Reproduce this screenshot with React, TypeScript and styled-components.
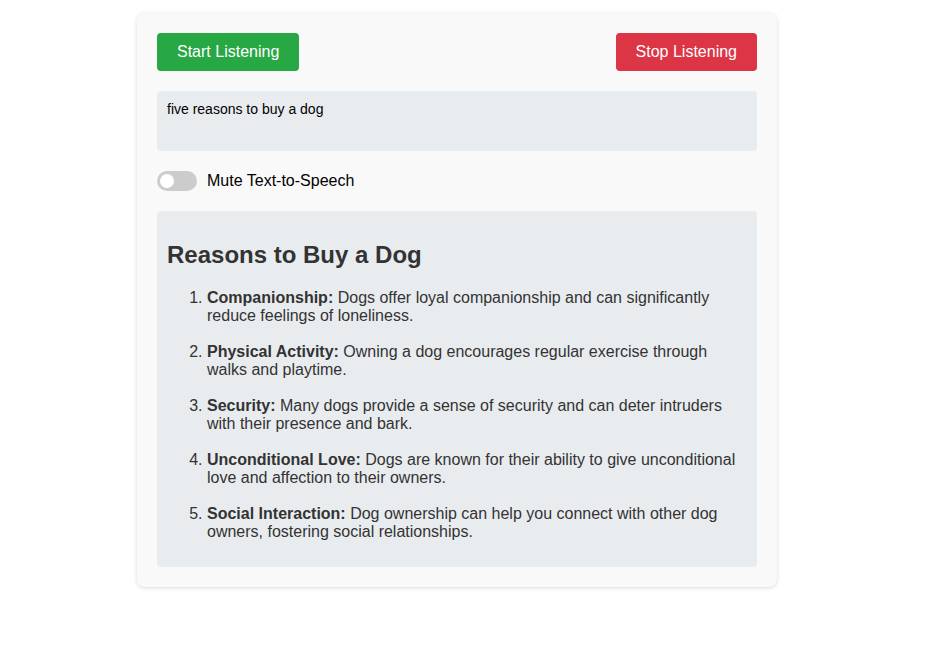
import React from "react";
import styled, { createGlobalStyle } from "styled-components";

const GlobalStyle = createGlobalStyle`
  body {
    margin: 0;
    background: #ffffff;
    font-family: "Liberation Sans", Arial, sans-serif;
  }
`;

const Page = styled.div`
  padding: 13px 0 40px 137px;
`;

const Card = styled.div`
  width: 600px;
  padding: 20px;
  background: #f9f9f9;
  border-radius: 8px;
  box-shadow: 0 1px 4px rgba(0, 0, 0, 0.15);
`;

const Controls = styled.div`
  display: flex;
  justify-content: space-between;
  margin-bottom: 20px;
`;

const Button = styled.button<{ $variant: "start" | "stop" }>`
  height: 38px;
  padding: 0 20px;
  border: none;
  border-radius: 4px;
  font-family: "Liberation Sans", Arial, sans-serif;
  font-size: 16px;
  color: #ffffff;
  background: ${(p) => (p.$variant === "start" ? "#28a745" : "#dc3545")};
  cursor: pointer;
`;

const Transcript = styled.div`
  box-sizing: border-box;
  height: 60px;
  padding: 10px;
  background: #e9ecef;
  border-radius: 4px;
  font-size: 14px;
  line-height: 16px;
  color: #000000;
`;

const ToggleRow = styled.label`
  display: flex;
  align-items: center;
  gap: 10px;
  margin: 20px 0;
  font-size: 16px;
  color: #000000;
`;

const Track = styled.span`
  position: relative;
  width: 40px;
  height: 20px;
  border-radius: 10px;
  background: #cccccc;
`;

const Knob = styled.span`
  position: absolute;
  top: 3px;
  left: 3px;
  width: 14px;
  height: 14px;
  border-radius: 50%;
  background: #ffffff;
`;

const Response = styled.div`
  padding: 10px;
  background: #e9ecef;
  border-radius: 4px;
  color: #333333;
  display: flow-root;
`;

const Title = styled.h2`
  margin: 20px 0;
  font-size: 24px;
  line-height: 28px;
  font-weight: bold;
`;

const List = styled.ol`
  margin: 0 0 16px;
  padding-left: 40px;
  font-size: 16px;
  line-height: 18px;

  li + li {
    margin-top: 18px;
  }
`;

const reasons = [
  ["Companionship:", "Dogs offer loyal companionship and can significantly reduce feelings of loneliness."],
  ["Physical Activity:", "Owning a dog encourages regular exercise through walks and playtime."],
  ["Security:", "Many dogs provide a sense of security and can deter intruders with their presence and bark."],
  ["Unconditional Love:", "Dogs are known for their ability to give unconditional love and affection to their owners."],
  ["Social Interaction:", "Dog ownership can help you connect with other dog owners, fostering social relationships."],
];

export default function App() {
  return (
    <Page>
      <GlobalStyle />
      <Card>
        <Controls>
          <Button $variant="start">Start Listening</Button>
          <Button $variant="stop">Stop Listening</Button>
        </Controls>
        <Transcript>five reasons to buy a dog</Transcript>
        <ToggleRow>
          <Track>
            <Knob />
          </Track>
          Mute Text-to-Speech
        </ToggleRow>
        <Response>
          <Title>Reasons to Buy a Dog</Title>
          <List>
            {reasons.map(([head, body]) => (
              <li key={head}>
                <strong>{head}</strong> {body}
              </li>
            ))}
          </List>
        </Response>
      </Card>
    </Page>
  );
}
